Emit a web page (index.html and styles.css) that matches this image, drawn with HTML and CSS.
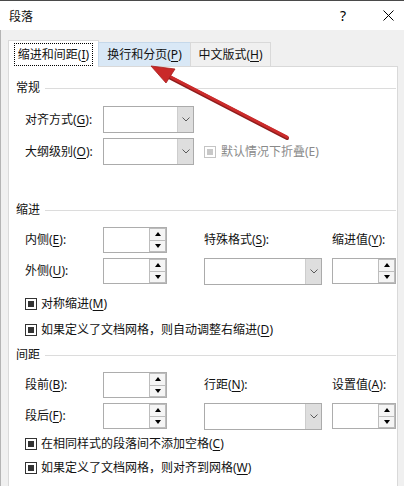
FILE: index.html
```html
<!DOCTYPE html>
<html lang="zh-CN">
<head>
<meta charset="utf-8">
<title>段落</title>
<link rel="stylesheet" href="styles.css">
</head>
<body>
<div class="window">
  <div class="titlebar">
    <span class="title">段落</span>
    <span class="help">?</span>
    <span class="close">
      <svg width="11" height="11" viewBox="0 0 11 11"><path d="M0.5 0.5 L10.5 10.5 M10.5 0.5 L0.5 10.5" stroke="#000" stroke-width="1" fill="none"/></svg>
    </span>
  </div>
  <div class="content">
    <div class="tabs">
      <div class="tab tab-1 active"><span class="focus">缩进和间距(<u>I</u>)</span></div>
      <div class="tab tab-2 hover">换行和分页(<u>P</u>)</div>
      <div class="tab tab-3">中文版式(<u>H</u>)</div>
    </div>
    <div class="panel">
      <div class="section-title"><span>常规</span></div>
      <div class="general">
        <span class="label">对齐方式(<u>G</u>):</span>
        <div class="combo combo-sm"><span class="combo-btn"><svg width="8" height="5" viewBox="0 0 8 5"><polyline points="0.5,0.5 4,4 7.5,0.5" fill="none" stroke="#5a5a5a" stroke-width="1"/></svg></span></div>
        <span></span>
        <span class="label">大纲级别(<u>O</u>):</span>
        <div class="combo combo-sm"><span class="combo-btn"><svg width="8" height="5" viewBox="0 0 8 5"><polyline points="0.5,0.5 4,4 7.5,0.5" fill="none" stroke="#5a5a5a" stroke-width="1"/></svg></span></div>
        <label class="check disabled inline"><span class="box"></span><span>默认情况下折叠(E)</span></label>
      </div>

      <div class="section-title sec-indent"><span>缩进</span></div>
      <div class="fields">
        <span class="label">内侧(<u>E</u>):</span>
        <div class="spin"><span class="spin-btns"><span class="sb"><i class="up"></i></span><span class="sb"><i class="down"></i></span></span></div>
        <span class="label">特殊格式(<u>S</u>):</span>
        <span class="label">缩进值(<u>Y</u>):</span>
        <span class="label">外侧(<u>U</u>):</span>
        <div class="spin"><span class="spin-btns"><span class="sb"><i class="up"></i></span><span class="sb"><i class="down"></i></span></span></div>
        <div class="combo combo-lg"><span class="combo-btn"><svg width="8" height="5" viewBox="0 0 8 5"><polyline points="0.5,0.5 4,4 7.5,0.5" fill="none" stroke="#5a5a5a" stroke-width="1"/></svg></span></div>
        <div class="spin"><span class="spin-btns"><span class="sb"><i class="up"></i></span><span class="sb"><i class="down"></i></span></span></div>
      </div>
      <label class="check c1"><span class="box"></span><span>对称缩进(<u>M</u>)</span></label>
      <label class="check c2"><span class="box"></span><span>如果定义了文档网格，则自动调整右缩进(<u>D</u>)</span></label>

      <div class="section-title sec-spacing"><span>间距</span></div>
      <div class="fields">
        <span class="label">段前(<u>B</u>):</span>
        <div class="spin"><span class="spin-btns"><span class="sb"><i class="up"></i></span><span class="sb"><i class="down"></i></span></span></div>
        <span class="label">行距(<u>N</u>):</span>
        <span class="label">设置值(<u>A</u>):</span>
        <span class="label">段后(<u>F</u>):</span>
        <div class="spin"><span class="spin-btns"><span class="sb"><i class="up"></i></span><span class="sb"><i class="down"></i></span></span></div>
        <div class="combo combo-lg"><span class="combo-btn"><svg width="8" height="5" viewBox="0 0 8 5"><polyline points="0.5,0.5 4,4 7.5,0.5" fill="none" stroke="#5a5a5a" stroke-width="1"/></svg></span></div>
        <div class="spin"><span class="spin-btns"><span class="sb"><i class="up"></i></span><span class="sb"><i class="down"></i></span></span></div>
      </div>
      <label class="check c3"><span class="box"></span><span>在相同样式的段落间不添加空格(<u>C</u>)</span></label>
      <label class="check c4"><span class="box"></span><span>如果定义了文档网格，则对齐到网格(<u>W</u>)</span></label>
    </div>
  </div>
  <svg class="arrow" width="404" height="486" viewBox="0 0 404 486">
    <line x1="287" y1="138" x2="167" y2="76" stroke="#8e1c1c" stroke-width="4" stroke-linecap="round"/>
    <line x1="287" y1="137" x2="167" y2="75" stroke="#cc2b2b" stroke-width="3" stroke-linecap="round"/>
    <polygon points="151,66 175,69 166,83" fill="#c92929" stroke="#a61f1f" stroke-width="0.8" stroke-linejoin="round"/>
  </svg>
</div>
</body>
</html>
```

FILE: styles.css
```css
* { box-sizing: border-box; }

html, body {
  margin: 0;
  padding: 0;
}

body {
  width: 404px;
  height: 486px;
  overflow: hidden;
  background: #f0f0f0;
  font-family: "Noto Sans", "Noto Sans CJK SC", sans-serif;
  font-size: 12px;
  line-height: 16px;
  color: #111;
}

u {
  text-decoration: underline;
  text-underline-offset: 2px;
  text-decoration-thickness: 1px;
}

.window {
  position: relative;
  width: 404px;
  height: 486px;
  overflow: hidden;
}

/* title bar */
.titlebar {
  height: 30px;
  background: #fff;
  border-top: 1px solid #4a4a4a;
  display: flex;
  align-items: center;
}

.title {
  flex: 1;
  margin-left: 9px;
  font-family: "Noto Sans CJK SC", sans-serif;
  font-size: 12px;
}

.help {
  width: 46px;
  text-align: center;
  font-size: 14px;
  color: #000;
}

.close {
  width: 31px;
  margin-left: 7px;
  display: flex;
  justify-content: center;
  align-items: center;
}

/* body */
.content {
  height: 456px;
  border-left: 1px solid #b4b4b4;
  padding-top: 10px;
}

.tabs {
  position: relative;
  z-index: 1;
  display: flex;
  align-items: flex-start;
  height: 26px;
  margin-left: 7px;
}

.tab {
  height: 24px;
  margin-top: 2px;
  margin-left: -1px;
  border: 1px solid #d9d9d9;
  border-bottom: none;
  background: #f0f0f0;
  display: flex;
  align-items: center;
  justify-content: center;
  white-space: nowrap;
  padding-top: 1px;
}

.tab-1 { width: 91px; margin-left: 0; }
.tab-2 { width: 93px; }
.tab-3 { width: 81px; }

.tab.active {
  height: 27px;
  margin-top: 0;
  background: #fff;
  padding-top: 1px;
}

.tab.hover {
  background: #d9e8f6;
  border-color: #c5d8ea;
}

.focus {
  display: inline-block;
  padding: 3px 3px 2px;
  outline: 1px dotted #000;
  outline-offset: 0;
}

.panel {
  position: relative;
  margin-left: 7px;
  width: 390px;
  height: 440px;
  background: #fff;
  border: 1px solid #d9d9d9;
  padding: 13px 1px 0 7px;
}

.section-title {
  display: flex;
  align-items: center;
  height: 16px;
}

.section-title::after {
  content: "";
  flex: 1;
  height: 1px;
  background: #dcdcdc;
  margin-left: 5px;
}

.sec-indent { margin-top: 37px; }
.sec-spacing { margin-top: 6px; }

.label {
  white-space: nowrap;
}

/* general */
.general {
  margin-top: 10px;
  margin-left: 9px;
  display: grid;
  grid-template-columns: 78px 91px auto;
  grid-auto-rows: 27px;
  row-gap: 5px;
  align-items: center;
}

.check.inline {
  margin-left: 10px;
  height: auto;
}

/* indent / spacing fields */
.fields {
  margin-top: 9px;
  margin-left: 9px;
  display: grid;
  grid-template-columns: 78px 101px 128px 64px;
  grid-auto-rows: 26px;
  row-gap: 5px;
  align-items: center;
}

/* combo box */
.combo {
  height: 27px;
  border: 1px solid #ababab;
  background: #fff;
  display: flex;
  justify-content: flex-end;
}

.combo-sm { width: 91px; }
.combo-lg { width: 118px; }

.combo-btn {
  width: 16px;
  background: #dedede;
  border-left: 1px solid #cdcdcd;
  display: flex;
  align-items: center;
  justify-content: center;
}

/* spinner */
.spin {
  width: 64px;
  height: 26px;
  border: 1px solid #adadad;
  background: #fff;
  display: flex;
  justify-content: flex-end;
}

.spin-btns {
  width: 17px;
  display: flex;
  flex-direction: column;
}

.sb {
  flex: 1;
  border: 1px solid #bdbdbd;
  background: #f5f5f5;
  display: flex;
  align-items: center;
  justify-content: center;
}

.sb + .sb { border-top: none; }

.up {
  width: 0;
  height: 0;
  border-left: 3px solid transparent;
  border-right: 3px solid transparent;
  border-bottom: 4px solid #000;
}

.down {
  width: 0;
  height: 0;
  border-left: 3px solid transparent;
  border-right: 3px solid transparent;
  border-top: 4px solid #000;
}

/* checkboxes */
.check {
  display: flex;
  align-items: center;
  gap: 4px;
  height: 22px;
  margin-left: 9px;
  white-space: nowrap;
}

.box {
  width: 12px;
  height: 12px;
  border: 1px solid #333;
  padding: 2px;
  background: #fff;
  flex: none;
}

.box::after {
  content: "";
  display: block;
  width: 100%;
  height: 100%;
  background: #333;
}

.check.disabled { color: #8a8a8a; gap: 5px; }
.check.disabled .box { border-color: #c4c4c4; }
.check.disabled .box::after { background: #c8c8c8; }

.c1 { margin-top: 9px; }
.c2 { margin-top: 4px; }
.c3 { margin-top: 4px; }
.c4 { margin-top: 2px; }

/* annotation arrow */
.arrow {
  position: absolute;
  left: 0;
  top: 0;
  z-index: 10;
  pointer-events: none;
}
```
